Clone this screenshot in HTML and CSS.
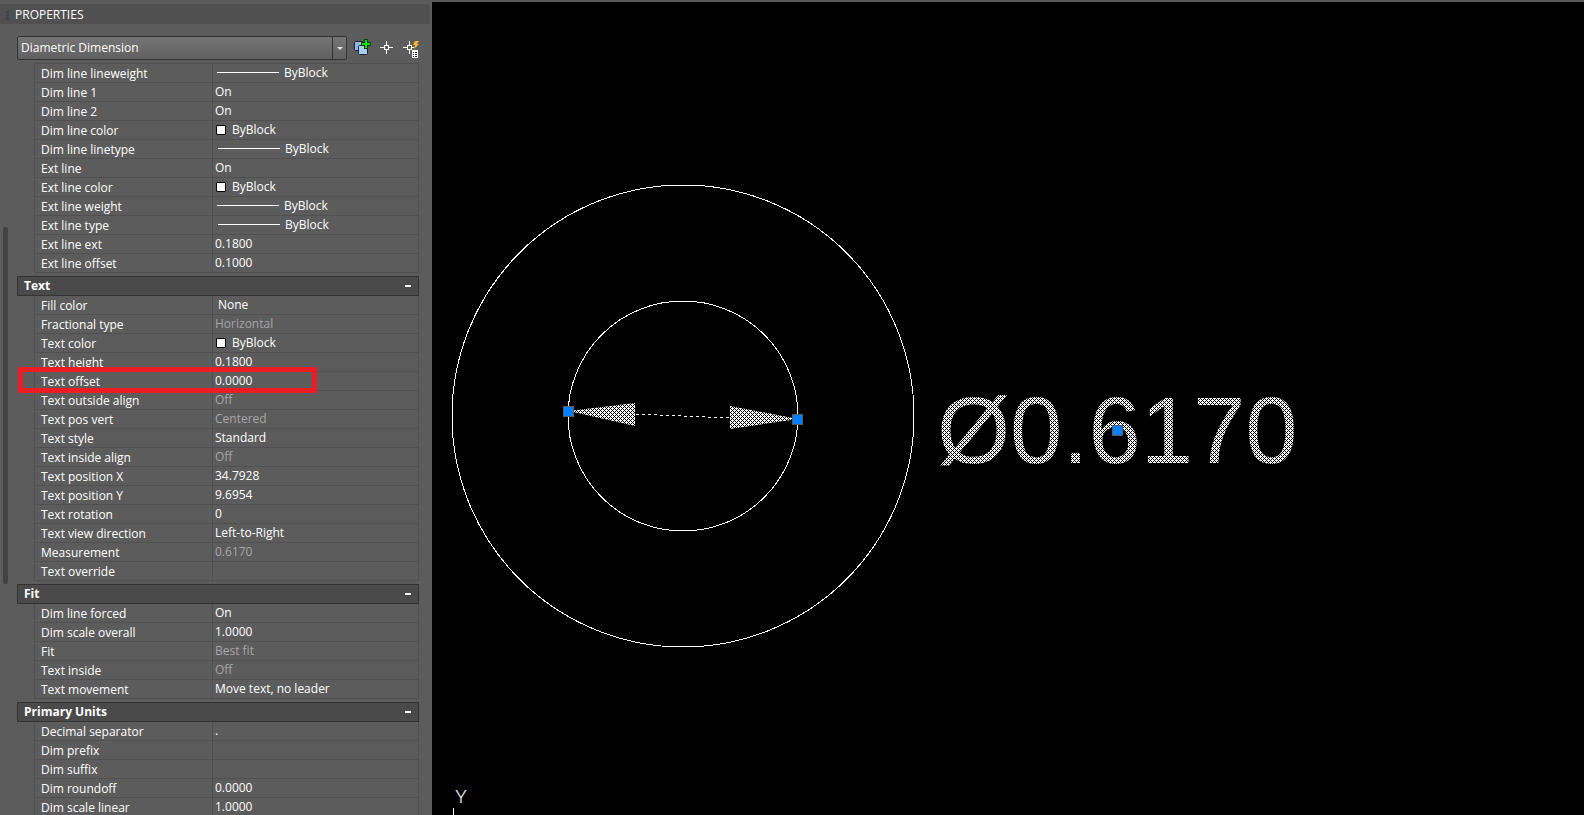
FILE: index.html
```
<!DOCTYPE html>
<html lang="en">
<head>
    <meta charset="UTF-8">
    <title>Properties</title>
    <link rel="stylesheet" href="styles.css">
</head>
<body>
    <aside class="panel">
        <header class="panel-title">
            <span class="grip"></span>
            <h1>PROPERTIES</h1>
        </header>
        <div class="panel-body">
            <div class="rail"><div class="thumb"></div></div>
            <div class="content">
                <div class="toolbar">
                    <div class="combo">
                        <select aria-label="Object type">
                            <option>Diametric Dimension</option>
                        </select>
                        <span class="combo-arrow"></span>
                    </div>
                    <button class="tool" aria-label="Toggle PICKADD">
                        <svg width="20" height="20" viewBox="0 0 20 20">
                            <rect x="1.5" y="3.5" width="9" height="9" rx="1" fill="#8fb8e6" stroke="#1d2733"/>
                            <rect x="5.5" y="7.5" width="9" height="9" rx="1" fill="#a9cdf2" stroke="#1d2733"/>
                            <path d="M11 1h4v3h3v4h-3v3h-4V8H8V4h3z" fill="#0c3b0c"/>
                            <path d="M12 2h2v3h3v2h-3v3h-2V7H9V5h3z" fill="#12dc12"/>
                        </svg>
                    </button>
                    <button class="tool" aria-label="Select objects">
                        <svg width="20" height="20" viewBox="0 0 20 20" fill="none" stroke="#fff">
                            <path d="M9.5 3v5M9.5 12v4M3 9.5h5M11 9.5h5"/>
                            <rect x="7.5" y="7.5" width="4" height="4"/>
                        </svg>
                    </button>
                    <button class="tool" aria-label="Quick select">
                        <svg width="20" height="20" viewBox="0 0 20 20">
                            <path d="M8.5 3v5M8.5 12v4M2 9.5h5M10 9.5h3" stroke="#fff"/>
                            <rect x="6.5" y="7.5" width="4" height="4" fill="none" stroke="#fff"/>
                            <path d="M14 3h4l-2 3h2l-5 5 1-4h-2z" fill="#ffb52e"/>
                            <rect x="11" y="12" width="6" height="8" fill="#fff"/>
                            <path d="M12 14.5h1M14 14.5h2M12 16.5h1M14 16.5h2M12 18.5h1M14 18.5h2" stroke="#222"/>
                        </svg>
                    </button>
                </div>

                <table class="props first">
                    <tr><th scope="row">Dim line lineweight</th><td><i class="line"></i>ByBlock</td></tr>
                    <tr><th scope="row">Dim line 1</th><td>On</td></tr>
                    <tr><th scope="row">Dim line 2</th><td>On</td></tr>
                    <tr><th scope="row">Dim line color</th><td><i class="swatch"></i>ByBlock</td></tr>
                    <tr><th scope="row">Dim line linetype</th><td><i class="line type"></i>ByBlock</td></tr>
                    <tr><th scope="row">Ext line</th><td>On</td></tr>
                    <tr><th scope="row">Ext line color</th><td><i class="swatch"></i>ByBlock</td></tr>
                    <tr><th scope="row">Ext line weight</th><td><i class="line"></i>ByBlock</td></tr>
                    <tr><th scope="row">Ext line type</th><td><i class="line type"></i>ByBlock</td></tr>
                    <tr><th scope="row">Ext line ext</th><td>0.1800</td></tr>
                    <tr><th scope="row">Ext line offset</th><td>0.1000</td></tr>
                </table>

                <button class="section">Text<span class="minus"></span></button>
                <table class="props">
                    <tr><th scope="row">Fill color</th><td class="indent">None</td></tr>
                    <tr><th scope="row">Fractional type</th><td class="off">Horizontal</td></tr>
                    <tr><th scope="row">Text color</th><td><i class="swatch"></i>ByBlock</td></tr>
                    <tr><th scope="row">Text height</th><td>0.1800</td></tr>
                    <tr><th scope="row" class="marked">Text offset<span class="marker"></span></th><td>0.0000</td></tr>
                    <tr><th scope="row">Text outside align</th><td class="off">Off</td></tr>
                    <tr><th scope="row">Text pos vert</th><td class="off">Centered</td></tr>
                    <tr><th scope="row">Text style</th><td>Standard</td></tr>
                    <tr><th scope="row">Text inside align</th><td class="off">Off</td></tr>
                    <tr><th scope="row">Text position X</th><td>34.7928</td></tr>
                    <tr><th scope="row">Text position Y</th><td>9.6954</td></tr>
                    <tr><th scope="row">Text rotation</th><td>0</td></tr>
                    <tr><th scope="row">Text view direction</th><td>Left-to-Right</td></tr>
                    <tr><th scope="row">Measurement</th><td class="off">0.6170</td></tr>
                    <tr><th scope="row">Text override</th><td></td></tr>
                </table>

                <button class="section">Fit<span class="minus"></span></button>
                <table class="props">
                    <tr><th scope="row">Dim line forced</th><td>On</td></tr>
                    <tr><th scope="row">Dim scale overall</th><td>1.0000</td></tr>
                    <tr><th scope="row">Fit</th><td class="off">Best fit</td></tr>
                    <tr><th scope="row">Text inside</th><td class="off">Off</td></tr>
                    <tr><th scope="row">Text movement</th><td>Move text, no leader</td></tr>
                </table>

                <button class="section">Primary Units<span class="minus"></span></button>
                <table class="props">
                    <tr><th scope="row">Decimal separator</th><td>.</td></tr>
                    <tr><th scope="row">Dim prefix</th><td></td></tr>
                    <tr><th scope="row">Dim suffix</th><td></td></tr>
                    <tr><th scope="row">Dim roundoff</th><td>0.0000</td></tr>
                    <tr><th scope="row">Dim scale linear</th><td>1.0000</td></tr>
                </table>
            </div>
        </div>
    </aside>

    <main class="drawing">
        <svg width="100%" height="100%">
            <defs>
                <pattern id="hatch" width="4" height="4" patternUnits="userSpaceOnUse" shape-rendering="crispEdges">
                    <rect width="4" height="4" fill="#fff"/>
                    <path d="M0 0h1v1H0zM1 1h1v1H1zM3 1h1v1H3zM2 2h1v1H2zM1 3h1v1H1zM3 3h1v1H3z" fill="#000"/>
                </pattern>
            </defs>
            <g class="stroke">
                <circle cx="251" cy="414" r="231"/>
                <circle cx="251" cy="414" r="115"/>
                <path d="M204 412L298 416" stroke-dasharray="3 3"/>
                <path d="M21.5 806v20"/>
            </g>
            <!-- arrowheads -->
            <path d="M137 409L203 401V424zM366 417L298 404V427z" fill="url(#hatch)"/>
            <text class="dim" x="505" y="461" fill="url(#hatch)">Ø0.6170</text>
            <g class="handle">
                <rect x="131.5" y="404.5" width="10" height="10"/>
                <rect x="360.5" y="412.5" width="10" height="10"/>
                <rect x="680.5" y="423.5" width="10" height="10"/>
            </g>
            <text class="axis" x="29" y="801" text-anchor="middle">Y</text>
        </svg>
    </main>
</body>
</html>
```
FILE: styles.css
```
* {
    box-sizing: border-box;
}
body {
    margin: 0;
    height: 100vh;
    display: flex;
    overflow: hidden;
    background: #5c5c5c;
    color: #fff;
    font: 12px/18px "Open Sans", sans-serif;
}
button, select {
    font: inherit;
    color: inherit;
    border: 0;
    padding: 0;
    background: none;
}

/* properties palette */
.panel {
    width: 432px;
    flex: none;
    padding-top: 4px;
    overflow: hidden;
}
.panel-title {
    display: flex;
    align-items: center;
    gap: 6px;
    height: 20px;
    margin-right: 2px;
    padding: 2px 0 0 6px;
    background: #505050;
    border-radius: 0 4px 0 0;
}
.panel-title h1 {
    margin: 0;
    font-size: 12px;
    font-weight: normal;
}
.grip {
    width: 3px;
    height: 9px;
    background: repeating-linear-gradient(#3c3c3c 0 1px, #505050 1px 2px);
}
.panel-body {
    display: flex;
}
.rail {
    flex: none;
    width: 17px;
    padding: 203px 9px 0 3px;
}
.thumb {
    height: 357px;
    background: #424242;
    border-radius: 2px;
}
.content {
    flex: 1;
    padding: 12px 13px 0 0;
}
.toolbar {
    display: flex;
    align-items: center;
    gap: 4px;
    height: 24px;
    margin-bottom: 3px;
}
.combo {
    display: flex;
    width: 330px;
    height: 24px;
    margin-right: 2px;
    border: 1px solid #333;
    border-radius: 2px;
    background: linear-gradient(#757575, #606060);
}
.combo select {
    flex: 1;
    appearance: none;
    padding-left: 3px;
    outline: 0;
}
.combo-arrow {
    display: flex;
    align-items: center;
    justify-content: center;
    width: 14px;
    border-left: 1px solid #333;
}
.combo-arrow::after {
    content: "";
    border: 3px solid transparent;
    border-top-color: #e6e6e6;
    border-bottom: 0;
}
.tool {
    width: 20px;
    height: 20px;
}
.tool svg {
    display: block;
}

.props {
    width: 385px;
    margin: 0 0 3px 17px;
    border-spacing: 0;
    table-layout: fixed;
    border-left: 1px solid #505050;
    border-right: 1px solid #505050;
}
.props.first {
    border-top: 1px solid #505050;
}
.props th, .props td {
    height: 19px;
    border-bottom: 1px solid #505050;
    white-space: nowrap;
    line-height: 16px;
}
.props th {
    width: 177px;
    padding: 2px 0 0 6px;
    font-weight: normal;
    text-align: left;
}
.props td {
    padding: 1px 0 1px 2px;
    border-left: 1px solid #505050;
}
.props .off {
    color: #a6a6a6;
}
.props .indent {
    padding-left: 5px;
}
.line {
    display: inline-block;
    width: 62px;
    height: 1px;
    margin: 0 5px 0 2px;
    background: #fff;
    vertical-align: 4px;
}
.line.type {
    margin-left: 3px;
}
.swatch {
    display: inline-block;
    width: 10px;
    height: 10px;
    margin: 0 6px 0 1px;
    border: 1px solid #000;
    border-radius: 1px;
    background: #fff;
    vertical-align: -1px;
}
.marked {
    position: relative;
}
.marker {
    position: absolute;
    z-index: 1;
    top: -5px;
    left: -17px;
    width: 299px;
    height: 26px;
    border: 5px solid #ed1c24;
}
.section {
    display: flex;
    align-items: center;
    justify-content: space-between;
    width: 402px;
    height: 20px;
    padding: 0 7px 0 6px;
    border: 1px solid #333;
    background: #4a4a4a;
    font-weight: bold;
}
.minus {
    width: 6px;
    height: 2px;
    background: #fff;
}

/* model space */
.drawing {
    flex: 1;
    margin-top: 2px;
    background: #000;
}
.drawing svg {
    display: block;
}
.stroke {
    fill: none;
    stroke: #fff;
    shape-rendering: crispEdges;
}
.handle {
    fill: #007fff;
    stroke: #5a5a5a;
}
.dim {
    font: 94px "Liberation Sans", Arial, sans-serif;
}
.axis {
    font: 300 19px Roboto, sans-serif;
    fill: #fff;
}
```
